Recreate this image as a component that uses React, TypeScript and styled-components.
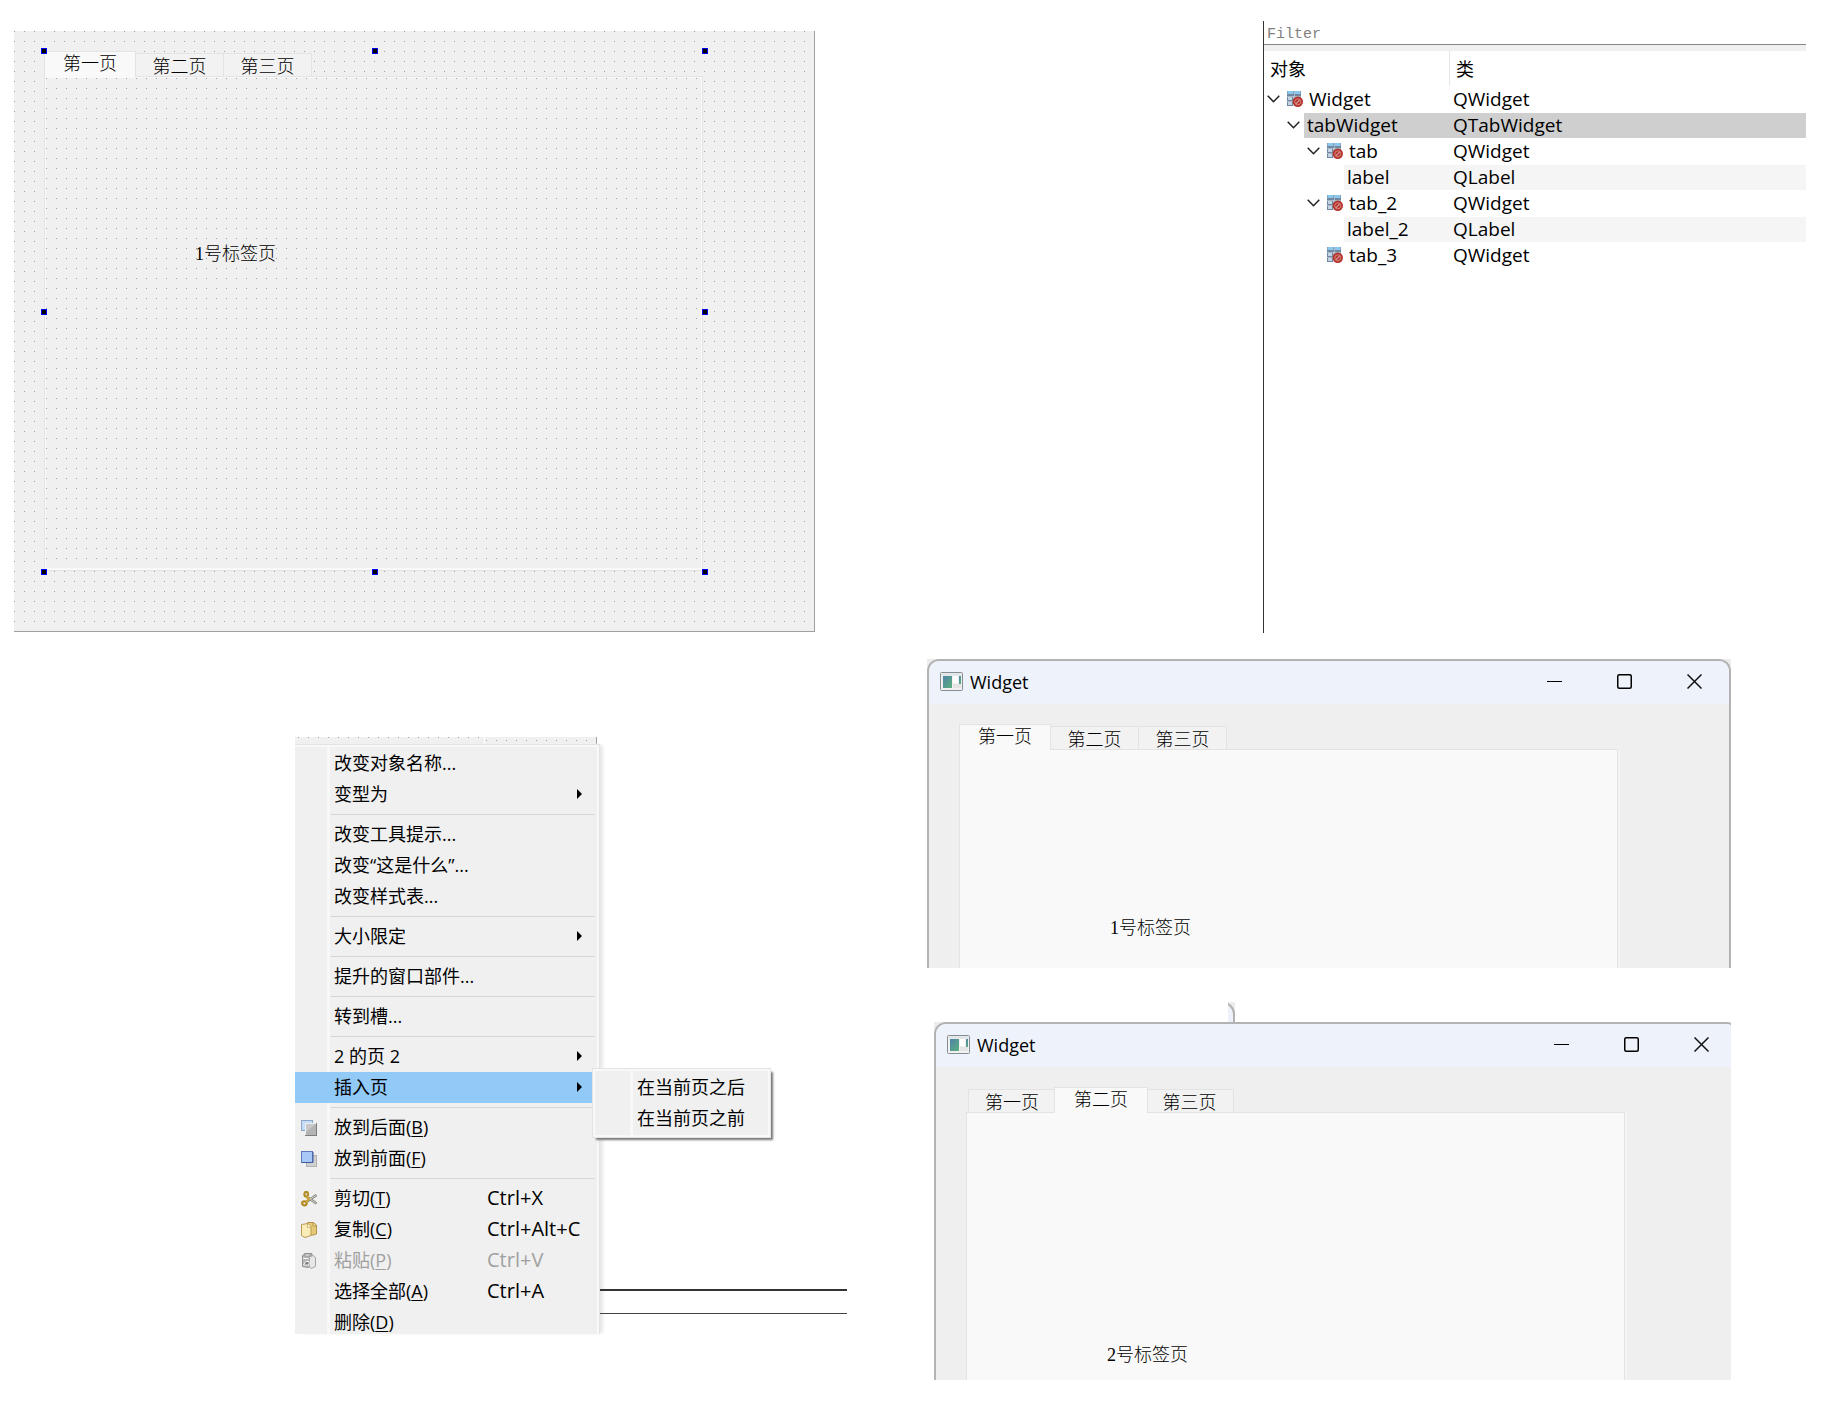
import React from "react";
import styled, { createGlobalStyle, css } from "styled-components";

const uiFont = `"Open Sans", "Noto Sans CJK SC", sans-serif`;
const songFont = `"Liberation Serif", "Noto Sans CJK SC", serif`;

const face = "#f0f0f0";
const light = "#f9f9f9";
const line = "#e3e3e3";

const GlobalStyle = createGlobalStyle`
  *, *::before, *::after { box-sizing: border-box; }
  body { margin: 0; background: #fff; color: #000; font-family: ${uiFont}; }
  button, input { font: inherit; color: inherit; border: 0; background: none; padding: 0; margin: 0; }
  ul { list-style: none; margin: 0; padding: 0; }
`;

const dotGrid = css`
  background-color: #a0a0a0;
  background-image: linear-gradient(90deg, transparent 1px, ${face} 1px),
    linear-gradient(transparent 1px, ${face} 1px);
  background-size: 10px 10px;
`;

const Page = styled.main`
  display: grid;
  grid-template-columns: minmax(0, 833fr) minmax(0, 879fr);
  column-gap: 80px;
  align-items: start;
  padding: 21px 29px 24px 14px;
`;

const Column = styled.div`
  display: flex;
  flex-direction: column;
`;

/* ---------- tab widget ---------- */

const TabWidgetBox = styled.div`
  position: relative;
  flex: 1;
  display: flex;
  flex-direction: column;
`;

const TabBar = styled.div<{ $inset?: boolean }>`
  display: flex;
  align-items: flex-end;
  height: 25px;
  padding-left: ${(p) => (p.$inset ? 2 : 0)}px;
`;

const Tab = styled.button<{ $active: boolean }>`
  font-family: ${songFont};
  font-weight: 300;
  font-size: 18px;
  line-height: 22px;
  text-align: center;
  white-space: nowrap;
  border: 1px solid ${line};
  border-bottom: 0;
  border-left-width: 0;
  width: 88px;
  height: 23px;
  padding-top: 2px;
  background: #f2f2f2;
  &:first-child { border-left-width: 1px; }
  ${(p) =>
    p.$active &&
    css`
      position: relative;
      z-index: 1;
      width: 94px;
      height: 26px;
      padding: 0 0 2px;
      margin: 0 -2px -1px;
      border-left-width: 1px;
      background: ${light};
      &:first-child { width: 92px; margin: 0 0 -1px; }
    `}
`;

const Pane = styled.div<{ $dotted?: boolean; $x: number; $y: number }>`
  flex: 1;
  border: 1px solid ${line};
  padding: ${(p) => p.$y}px 0 0 ${(p) => p.$x}px;
  font-family: ${songFont};
  font-weight: 300;
  font-size: 18px;
  line-height: 22px;
  background: ${light};
  ${(p) =>
    p.$dotted
      ? css`
          ${dotGrid}
          background-position: 1px 1px;
          box-shadow: inset 1px 1px 0 ${light}, inset -1px -2px 0 ${light};
        `
      : css`
          border-bottom: 0;
          box-shadow: 2px 0 0 #f3f3f3;
        `}
`;

const tabNames = ["第一页", "第二页", "第三页"];

function TabWidget(props: {
  active: number;
  text: string;
  x: number;
  y: number;
  dotted?: boolean;
  children?: React.ReactNode;
}) {
  return (
    <TabWidgetBox>
      <TabBar role="tablist" $inset={props.active > 0}>
        {tabNames.map((name, i) => (
          <Tab key={name} role="tab" aria-selected={i === props.active} $active={i === props.active}>
            {name}
          </Tab>
        ))}
      </TabBar>
      <Pane role="tabpanel" $dotted={props.dotted} $x={props.x} $y={props.y}>
        {props.text}
      </Pane>
      {props.children}
    </TabWidgetBox>
  );
}

/* ---------- form editor ---------- */

const FormEditor = styled.section`
  ${dotGrid}
  display: flex;
  height: 601px;
  margin: 10px 32px 105px 0;
  padding: 20px 111px 60px 30px;
  border: solid #a0a0a0;
  border-width: 0 1px 1px 0;
`;

const Selection = styled.div`
  position: absolute;
  inset: -3px -5px -4px -3px;
  z-index: 2;
  display: grid;
  grid-template-columns: repeat(3, 6px);
  grid-template-rows: repeat(3, 6px);
  justify-content: space-between;
  align-content: space-between;
  pointer-events: none;
`;

const Handle = styled.i<{ $hidden: boolean }>`
  background: #000;
  border: 1px solid #0000f0;
  visibility: ${(p) => (p.$hidden ? "hidden" : "visible")};
`;

/* ---------- context menu ---------- */

const MenuScene = styled.section`
  display: flex;
  margin-left: 281px;
`;

const MenuColumn = styled.div`
  flex: 0 0 305px;
`;

const FormStrip = styled.div`
  display: flex;
  height: 7px;
  margin-right: 3px;
  border-right: 1px solid #a0a0a0;
`;

const StripDots = styled.div<{ $w?: number; $x: number; $y: number }>`
  ${dotGrid}
  ${(p) => (p.$w ? `width: ${p.$w}px; border-right: 1px solid #fff;` : "flex: 1;")}
  background-position: ${(p) => p.$x}px ${(p) => p.$y}px;
`;

const menuBack = (x: number) =>
  `linear-gradient(90deg, ${face} ${x}px, #f8f8f8 ${x}px, #f8f8f8 ${x + 3}px, ${face} ${x + 3}px)`;

const Menu = styled.ul`
  border: solid ${line};
  border-width: 1px 1px 0 0;
  padding: 3px 3px 0 0;
  background: ${menuBack(32)};
  box-shadow: inset -2px 2px 0 #f8f8f8, 4px 0 3px -1px #e8e8e8;
`;

const MenuRow = styled.li<{ $cut?: boolean }>`
  position: relative;
  height: ${(p) => (p.$cut ? 27 : 31)}px;
  overflow: ${(p) => (p.$cut ? "hidden" : "visible")};
`;

const MenuButton = styled.button<{ $lit?: boolean }>`
  display: grid;
  grid-template-columns: 39px 153px 1fr;
  align-items: center;
  width: 100%;
  height: 31px;
  padding-bottom: 2px;
  font-size: 18px;
  line-height: 26px;
  font-weight: 400;
  text-align: left;
  white-space: nowrap;
  background: ${(p) => (p.$lit ? "#91c9f7" : "transparent")};
  &:disabled { color: #a0a0a0; }
  u { text-decoration-thickness: 1px; text-underline-offset: 2px; }
  svg { display: block; }
`;

const IconCell = styled.span`
  padding: 2px 0 0 6px;
`;

const Shortcut = styled.span`
  font-size: 20px;
`;

const ArrowCell = styled.span`
  justify-self: end;
  margin-right: 14px;
`;

const Separator = styled.li`
  height: 9px;
  padding: 4px 1px 4px 35px;
  &::before {
    content: "";
    display: block;
    height: 1px;
    background: #d7d7d7;
  }
`;

const Submenu = styled.ul`
  position: absolute;
  left: 297px;
  top: -4px;
  z-index: 3;
  width: 179px;
  border: 1px solid ${line};
  padding: 3px;
  background: ${menuBack(37)};
  box-shadow: inset 0 0 0 2px #f8f8f8, 3px 3px 2px -1px #777;
`;

const SubmenuButton = styled.button`
  display: block;
  width: 100%;
  height: 31px;
  padding: 0 0 2px 41px;
  font-size: 18px;
  line-height: 26px;
  text-align: left;
  white-space: nowrap;
`;

const Rules = styled.div`
  flex: 1;
  margin-top: 552px;
  height: 25px;
  border-top: 2px solid #333;
  border-bottom: 1px solid #444;
`;

const BackIcon = () => (
  <svg width="16" height="16" viewBox="0 0 16 16">
    <rect x=".5" y=".5" width="11" height="10" fill="#c5dcf8" stroke="#8fa5c8" />
    <rect x="4" y="3" width="12" height="13" fill="#7e7e7e" />
    <rect x="4" y="3" width="11" height="12" fill="#f0f0f0" />
    <rect x="5" y="4" width="10" height="11" fill="#b4b4b4" />
    <path d="M5 4h10L5 12z" fill="#c8c8c8" />
  </svg>
);
const FrontIcon = () => (
  <svg width="16" height="16" viewBox="0 0 16 16">
    <rect x="5.5" y="4.5" width="10" height="11" fill="#d0d0d0" stroke="#b2b2b2" />
    <rect x=".5" y=".5" width="11" height="11" fill="#a8c9f8" stroke="#5b78b8" />
    <path d="M1 11.5h11V1" fill="none" stroke="#3f5c9c" />
  </svg>
);
const CutIcon = () => (
  <svg width="16" height="16" viewBox="0 0 16 16" fill="none">
    <path d="M6 6l9.500 6.500M6 10.500 15.500 4" stroke="#80847c" strokeWidth="2.600" />
    <path d="M7 7l8 5M7 9.500l8-5" stroke="#d4d6d0" strokeWidth="1" />
    <ellipse cx="5.200" cy="3.200" rx="1.800" ry="2.300" stroke="#b08c22" strokeWidth="2.200" />
    <ellipse cx="3.400" cy="12.300" rx="2.300" ry="2" stroke="#b08c22" strokeWidth="2.200" />
    <path d="M5.500 5.500 8 8l-3 3" stroke="#c9a63a" strokeWidth="2.400" />
  </svg>
);
const CopyIcon = () => (
  <svg width="16" height="16" viewBox="0 0 16 16">
    <path d="M6.500.500h6l3 2.500v9l-3 1h-6z" fill="#e5c976" stroke="#b39447" />
    <path d="M12 1v3h3" fill="#f7e9b8" stroke="#b39447" />
    <path d="M.500 2.500 7 1.500l3 3v9l-6 2-3.500-2z" fill="#f9ecb8" stroke="#bb9b4e" />
    <path d="M6.500 2v3.500l3.500-.500" fill="#fffbe6" stroke="#bb9b4e" strokeWidth=".7" />
  </svg>
);
const PasteIcon = () => (
  <svg width="16" height="16" viewBox="0 0 16 16">
    <path d="M1.500 2.500 4 .500h7l-.500 12-3 2-6-1z" fill="#b5b5b5" stroke="#929292" />
    <path d="M4 1h5v2H4z" fill="#eee" stroke="#888" strokeWidth=".7" />
    <path d="M8.500 4 12 2.500l2.500 2v9l-4.500 2-1.500-2z" fill="#e8e8e8" stroke="#a5a5a5" />
    <path d="M2 5.500h5.500M2.500 12 5 8.500h3V12z" fill="#7c7c7c" stroke="#fff" strokeWidth=".9" />
  </svg>
);
const ArrowIcon = () => (
  <svg width="5" height="10" viewBox="0 0 5 10">
    <path d="M0 0 5 5 0 10z" />
  </svg>
);

type Item = {
  label: string;
  key?: string;
  shortcut?: string;
  arrow?: boolean;
  lit?: boolean;
  disabled?: boolean;
  icon?: React.ReactNode;
  submenu?: string[];
};

const menuGroups: Item[][] = [
  [{ label: "改变对象名称..." }, { label: "变型为", arrow: true }],
  [{ label: "改变工具提示..." }, { label: "改变“这是什么”..." }, { label: "改变样式表..." }],
  [{ label: "大小限定", arrow: true }],
  [{ label: "提升的窗口部件..." }],
  [{ label: "转到槽..." }],
  [
    { label: "2 的页 2", arrow: true },
    { label: "插入页", arrow: true, lit: true, submenu: ["在当前页之后", "在当前页之前"] },
  ],
  [
    { label: "放到后面", key: "B", icon: <BackIcon /> },
    { label: "放到前面", key: "F", icon: <FrontIcon /> },
  ],
  [
    { label: "剪切", key: "T", shortcut: "Ctrl+X", icon: <CutIcon /> },
    { label: "复制", key: "C", shortcut: "Ctrl+Alt+C", icon: <CopyIcon /> },
    { label: "粘贴", key: "P", shortcut: "Ctrl+V", icon: <PasteIcon />, disabled: true },
    { label: "选择全部", key: "A", shortcut: "Ctrl+A" },
    { label: "删除", key: "D" },
  ],
];

function ContextMenu() {
  return (
    <Menu>
      {menuGroups.map((group, g) => (
        <React.Fragment key={g}>
          {g > 0 && <Separator role="separator" />}
          {group.map((item, i) => (
            <MenuRow
              key={item.label}
              $cut={g === menuGroups.length - 1 && i === group.length - 1}
            >
              <MenuButton $lit={item.lit} disabled={item.disabled}>
                <IconCell>{item.icon}</IconCell>
                <span>
                  {item.label}
                  {item.key && (
                    <>
                      (<u>{item.key}</u>)
                    </>
                  )}
                </span>
                {item.shortcut && <Shortcut>{item.shortcut}</Shortcut>}
                {item.arrow && (
                  <ArrowCell>
                    <ArrowIcon />
                  </ArrowCell>
                )}
              </MenuButton>
              {item.submenu && (
                <Submenu>
                  {item.submenu.map((label) => (
                    <li key={label}>
                      <SubmenuButton>{label}</SubmenuButton>
                    </li>
                  ))}
                </Submenu>
              )}
            </MenuRow>
          ))}
        </React.Fragment>
      ))}
    </Menu>
  );
}

/* ---------- object inspector ---------- */

const Inspector = styled.section`
  height: 612px;
  margin: 0 0 26px 336px;
  border-left: 1px solid #333;
`;

const FilterInput = styled.input`
  display: block;
  width: 100%;
  height: 24px;
  padding: 3px 3px 0;
  font-family: "Liberation Mono", monospace;
  font-size: 15px;
  border-bottom: 1px solid #868686;
  outline: 0;
  &::placeholder { color: #808080; opacity: 1; }
`;

const Tree = styled.table`
  width: 100%;
  border-collapse: collapse;
  table-layout: fixed;
  border-top: 6px solid ${face};
  th, td { padding: 0; text-align: left; }
  td { height: 26px; }
`;

const HeadCell = styled.th<{ $first?: boolean }>`
  width: ${(p) => (p.$first ? "186px" : "auto")};
  height: 36px;
  font-size: 18px;
  font-weight: 400;
  line-height: 26px;
  > span {
    display: block;
    height: 35px;
    padding: 5px 0 0 6px;
    border-right: ${(p) => (p.$first ? `1px solid #e5e5e5` : "0")};
  }
`;

const CellBox = styled.div<{ $bg: string }>`
  display: flex;
  align-items: center;
  flex: 1;
  gap: 6px;
  height: 25px;
  padding-left: 3px;
  background: ${(p) => p.$bg};
  font-size: 19px;
  line-height: 25px;
`;

const NameCell = styled.div<{ $level: number }>`
  display: flex;
  align-items: center;
  padding-left: ${(p) => p.$level * 20}px;
`;

const Toggle = styled.button`
  display: grid;
  place-items: center start;
  width: 20px;
  height: 25px;
  padding-left: 3px;
`;

const Chevron = () => (
  <svg width="13" height="8" viewBox="0 0 13 8" fill="none" stroke="#222" strokeWidth="1.500">
    <path d="M.700.700 6.500 6.700 12.300.700" />
  </svg>
);

const WidgetIcon = () => (
  <svg width="16" height="16" viewBox="0 0 16 16">
    <path d="M0 0h14v15H0z" fill="#dfe6ec" />
    <path d="M0 0h7v5H0zM7.500 0H14v5H7.500zM0 5.500h6V10H0zM6.500 5.500H14V10H6.500zM0 10.500h6V15H0z" fill="#7088a0" />
    <path d="M.500 0h6v3h-6zM8 0h5.500v3H8z" fill="#8cc8ee" />
    <path d="M1 6h4v3H1zM7 6h6v3H7zM1 11h4v3H1z" fill="#c3d4e4" />
    <circle cx="10.800" cy="10.800" r="5.200" fill="#b3342c" />
    <circle cx="10.800" cy="10.800" r="3" fill="none" stroke="#d5837d" strokeWidth="1" />
    <path d="m9 12.800 3.700-4" stroke="#dc9a95" strokeWidth="1.200" />
  </svg>
);

const treeRows = [
  { name: "Widget", type: "QWidget", level: 0, open: true, icon: true, bg: "transparent" },
  { name: "tabWidget", type: "QTabWidget", level: 1, open: true, icon: false, bg: "#cfcfcf" },
  { name: "tab", type: "QWidget", level: 2, open: true, icon: true, bg: "transparent" },
  { name: "label", type: "QLabel", level: 3, open: false, icon: false, bg: "#f5f5f5" },
  { name: "tab_2", type: "QWidget", level: 2, open: true, icon: true, bg: "transparent" },
  { name: "label_2", type: "QLabel", level: 3, open: false, icon: false, bg: "#f5f5f5" },
  { name: "tab_3", type: "QWidget", level: 2, open: false, icon: true, bg: "transparent" },
];

function ObjectInspector() {
  return (
    <Inspector>
      <FilterInput aria-label="Filter" placeholder="Filter" />
      <Tree>
        <thead>
          <tr>
            <HeadCell $first>
              <span>对象</span>
            </HeadCell>
            <HeadCell>
              <span>类</span>
            </HeadCell>
          </tr>
        </thead>
        <tbody>
          {treeRows.map((row) => (
            <tr key={row.name}>
              <td>
                <NameCell $level={row.level}>
                  <Toggle aria-label={row.name}>{row.open && <Chevron />}</Toggle>
                  <CellBox $bg={row.bg}>
                    {row.icon && <WidgetIcon />}
                    {row.name}
                  </CellBox>
                </NameCell>
              </td>
              <td>
                <CellBox $bg={row.bg}>{row.type}</CellBox>
              </td>
            </tr>
          ))}
        </tbody>
      </Tree>
    </Inspector>
  );
}

/* ---------- running windows ---------- */

const WindowClip = styled.section<{ $h: number; $indent: number }>`
  height: ${(p) => p.$h}px;
  margin: 0 75px 0 ${(p) => p.$indent}px;
  overflow: hidden;
  background: #ececec;
`;

const WindowFrame = styled.div<{ $over: number }>`
  display: flex;
  flex-direction: column;
  height: 100%;
  margin-right: -${(p) => p.$over}px;
  border: 2px solid #b3b3b3;
  border-bottom: 0;
  border-radius: 12px 12px 0 0;
  background: #efefef;
  overflow: hidden;
`;

const TitleBar = styled.header`
  display: flex;
  align-items: center;
  gap: 7px;
  flex: 0 0 43px;
  padding: 0 0 2px 11px;
  background: #eef3fb;
  font-size: 18px;
  line-height: 24px;
`;

const Title = styled.span`
  flex: 1;
`;

const Controls = styled.div`
  display: flex;
`;

const ControlButton = styled.button`
  display: grid;
  place-items: center;
  width: 70px;
  height: 41px;
`;

const Body = styled.div`
  flex: 1;
  display: flex;
  padding: 20px 111px 0 30px;
`;

const Fragment = styled.div`
  width: 7px;
  height: 20px;
  margin: 34px 0 0 301px;
  overflow: hidden;
  background: #ececec;
  &::before {
    content: "";
    display: block;
    width: 24px;
    height: 24px;
    margin-left: -17px;
    border: 2px solid #b3b3b3;
    border-radius: 12px 12px 0 0;
    background: #eef3fb;
    box-shadow: 0 0 0 1px #ececec;
  }
`;

const AppIcon = () => (
  <svg width="23" height="19" viewBox="0 0 23 19">
    <defs>
      <linearGradient id="appPane" x1="0" y1="0" x2="1" y2="1">
        <stop offset="0" stopColor="#4f83a8" />
        <stop offset="1" stopColor="#5cb07c" />
      </linearGradient>
    </defs>
    <rect x=".5" y=".5" width="22" height="18" rx="1" fill="#f1f1f1" stroke="#848c94" />
    <path d="M1.500 1.500h20v2h-20z" fill="#dde2e6" />
    <rect x="3" y="4" width="9" height="12" fill="url(#appPane)" />
    <rect x="13" y="4" width="5" height="7" fill="#fff" />
    <rect x="13" y="12" width="8" height="4" fill="#e4e4e4" />
    <rect x="19" y="4" width="2" height="8" fill="url(#appPane)" />
  </svg>
);
const MinIcon = () => (
  <svg width="15" height="15" viewBox="0 0 15 15">
    <path d="M0 7.500h15" stroke="#000" />
  </svg>
);
const MaxIcon = () => (
  <svg width="15" height="15" viewBox="0 0 15 15">
    <rect x=".75" y=".75" width="13.500" height="13.500" rx="1.500" fill="none" stroke="#000" strokeWidth="1.500" />
  </svg>
);
const CloseIcon = () => (
  <svg width="15" height="15" viewBox="0 0 15 15">
    <path d="m.500.500 14 14M14.500.500l-14 14" stroke="#111" strokeWidth="1.500" />
  </svg>
);

function AppWindow(props: { height: number; indent: number; children: React.ReactNode }) {
  return (
    <WindowClip $h={props.height} $indent={props.indent}>
      <WindowFrame $over={props.indent}>
        <TitleBar>
          <AppIcon />
          <Title>Widget</Title>
          <Controls>
            <ControlButton aria-label="Minimize">
              <MinIcon />
            </ControlButton>
            <ControlButton aria-label="Maximize">
              <MaxIcon />
            </ControlButton>
            <ControlButton aria-label="Close">
              <CloseIcon />
            </ControlButton>
          </Controls>
        </TitleBar>
        <Body>{props.children}</Body>
      </WindowFrame>
    </WindowClip>
  );
}

export default function App() {
  return (
    <>
      <GlobalStyle />
      <Page>
        <Column>
          <FormEditor>
            <TabWidget active={0} text="1号标签页" x={150} y={166} dotted>
              <Selection>
                {Array.from({ length: 9 }, (_, i) => (
                  <Handle key={i} $hidden={i === 4} />
                ))}
              </Selection>
            </TabWidget>
          </FormEditor>
          <MenuScene>
            <MenuColumn>
              <FormStrip>
                <StripDots $w={190} $x={3} $y={0} />
                <StripDots $x={1} $y={3} />
              </FormStrip>
              <ContextMenu />
            </MenuColumn>
            <Rules />
          </MenuScene>
        </Column>
        <Column>
          <ObjectInspector />
          <AppWindow height={309} indent={0}>
            <TabWidget active={0} text="1号标签页" x={150} y={167} />
          </AppWindow>
          <Fragment />
          <AppWindow height={358} indent={7}>
            <TabWidget active={1} text="2号标签页" x={140} y={231} />
          </AppWindow>
        </Column>
      </Page>
    </>
  );
}
